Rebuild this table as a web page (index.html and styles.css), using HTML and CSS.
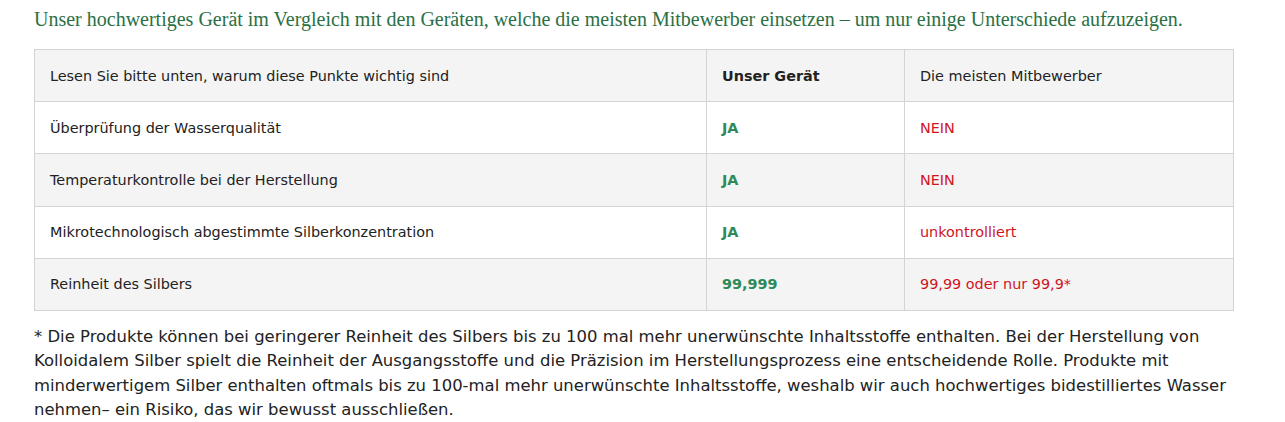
FILE: index.html
```html
<!DOCTYPE html>
<html lang="de">
<head>
<meta charset="utf-8">
<link rel="stylesheet" href="styles.css">
</head>
<body>
<div class="page">
  <h2 class="title">Unser hochwertiges Gerät im Vergleich mit den Geräten, welche die meisten Mitbewerber einsetzen – um nur einige Unterschiede aufzuzeigen.</h2>
  <table class="cmp">
    <colgroup><col class="c1"><col class="c2"><col class="c3"></colgroup>
    <tr class="alt">
      <td>Lesen Sie bitte unten, warum diese Punkte wichtig sind</td>
      <td class="bold">Unser Gerät</td>
      <td>Die meisten Mitbewerber</td>
    </tr>
    <tr>
      <td>Überprüfung der Wasserqualität</td>
      <td class="yes">JA</td>
      <td class="no">NEIN</td>
    </tr>
    <tr class="alt">
      <td>Temperaturkontrolle bei der Herstellung</td>
      <td class="yes">JA</td>
      <td class="no">NEIN</td>
    </tr>
    <tr>
      <td>Mikrotechnologisch abgestimmte Silberkonzentration</td>
      <td class="yes">JA</td>
      <td class="no">unkontrolliert</td>
    </tr>
    <tr class="alt">
      <td>Reinheit des Silbers</td>
      <td class="yes">99,999</td>
      <td class="no">99,99 oder nur 99,9*</td>
    </tr>
  </table>
  <p class="note">* Die Produkte können bei geringerer Reinheit des Silbers bis zu 100 mal mehr unerwünschte Inhaltsstoffe enthalten. Bei der Herstellung von Kolloidalem Silber spielt die Reinheit der Ausgangsstoffe und die Präzision im Herstellungsprozess eine entscheidende Rolle. Produkte mit minderwertigem Silber enthalten oftmals bis zu 100-mal mehr unerwünschte Inhaltsstoffe, weshalb wir auch hochwertiges bidestilliertes Wasser nehmen– ein Risiko, das wir bewusst ausschließen.</p>
</div>
</body>
</html>
```

FILE: styles.css
```css
html, body {
  margin: 0;
  padding: 0;
  background: #ffffff;
}

.page {
  padding: 0 34px 0 34px;
  width: 1199px;
}

.title {
  margin: 0;
  padding-top: 5px;
  font-family: "Liberation Serif", "Times New Roman", serif;
  font-weight: normal;
  font-size: 20px;
  line-height: 28px;
  color: #2b7045;
  white-space: nowrap;
}

.cmp {
  margin-top: 16px;
  width: 1199px;
  border-collapse: collapse;
  table-layout: fixed;
  font-family: "DejaVu Sans", Verdana, sans-serif;
  font-size: 14.4px;
  color: #222;
}

.c1 { width: 672px; }
.c2 { width: 198px; }
.c3 { width: 329px; }

.cmp td {
  border: 1px solid #d4d4d4;
  height: 52.2px;
  padding: 0 15px;
  box-sizing: border-box;
  vertical-align: middle;
}

.cmp tr.alt td {
  background: #f4f4f4;
}

.cmp .bold { font-weight: bold; }
.cmp .yes { color: #2e8a58; font-weight: bold; }
.cmp .no { color: #d0141f; }

.note {
  margin: 14px 0 0 0;
  width: 1199px;
  font-family: "DejaVu Sans", Verdana, sans-serif;
  font-size: 16.45px;
  line-height: 24.5px;
  color: #222;
}
```
